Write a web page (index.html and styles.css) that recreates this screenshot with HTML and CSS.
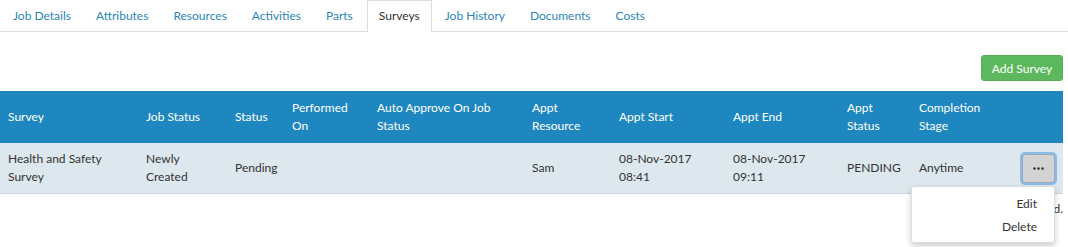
FILE: index.html
```html
<!DOCTYPE html>
<html lang="en">
<head>
  <meta charset="UTF-8">
  <meta name="viewport" content="width=device-width, initial-scale=1.0">
  <title>Job - Surveys</title>
  <link rel="stylesheet" href="styles.css">
</head>
<body>
  <ul class="tabs">
    <li><a href="#">Job Details</a></li>
    <li><a href="#">Attributes</a></li>
    <li><a href="#">Resources</a></li>
    <li><a href="#">Activities</a></li>
    <li><a href="#">Parts</a></li>
    <li class="active"><a href="#">Surveys</a></li>
    <li><a href="#">Job History</a></li>
    <li><a href="#">Documents</a></li>
    <li><a href="#">Costs</a></li>
  </ul>

  <div class="panel">
    <div class="toolbar">
      <button class="btn-add">Add Survey</button>
    </div>

    <table class="grid">
      <colgroup>
        <col style="width:138px">
        <col style="width:89px">
        <col style="width:57px">
        <col style="width:85px">
        <col style="width:155px">
        <col style="width:87px">
        <col style="width:114px">
        <col style="width:114px">
        <col style="width:72px">
        <col style="width:103px">
        <col>
      </colgroup>
      <thead>
        <tr>
          <th>Survey</th>
          <th>Job Status</th>
          <th>Status</th>
          <th>Performed On</th>
          <th>Auto Approve On Job Status</th>
          <th>Appt Resource</th>
          <th>Appt Start</th>
          <th>Appt End</th>
          <th>Appt Status</th>
          <th>Completion Stage</th>
          <th></th>
        </tr>
      </thead>
      <tbody>
        <tr>
          <td>Health and Safety Survey</td>
          <td>Newly Created</td>
          <td>Pending</td>
          <td></td>
          <td></td>
          <td>Sam</td>
          <td>08-Nov-2017 08:41</td>
          <td>08-Nov-2017 09:11</td>
          <td>PENDING</td>
          <td>Anytime</td>
          <td class="actions">
            <button class="btn-more" aria-label="More">
              <svg width="11" height="3" viewBox="0 0 11 3"><circle cx="1.5" cy="1.5" r="1.3"/><circle cx="5.5" cy="1.5" r="1.3"/><circle cx="9.5" cy="1.5" r="1.3"/></svg>
            </button>
          </td>
        </tr>
      </tbody>
    </table>

    <div class="footer">1 record found.</div>

    <ul class="menu">
      <li>Edit</li>
      <li>Delete</li>
    </ul>
  </div>
</body>
</html>
```

FILE: styles.css
```css
html, body {
  min-height: 247px;
}

body {
  margin: 0;
  font-family: 'Lato', 'Liberation Sans', sans-serif;
  font-size: 12px;
  color: #333;
  background: #fff;
}

.tabs {
  list-style: none;
  margin: 0;
  padding: 0 0 0 1px;
  display: flex;
  border-bottom: 1px solid #ddd;
  height: 31px;
}

.tabs li {
  margin-right: 1px;
}

.tabs a {
  display: block;
  height: 31px;
  line-height: 30px;
  padding: 0 11px;
  color: #2a86b8;
  text-decoration: none;
  border: 1px solid transparent;
  border-bottom: none;
  box-sizing: border-box;
}

.tabs li:first-child a {
  padding-left: 11px;
}

.tabs .active {
  margin-left: 1px;
}

.tabs .active a {
  color: #333;
  background: #fff;
  border-color: #ddd;
  height: 32px;
}

.panel {
  position: relative;
  width: 1063px;
}

.toolbar {
  display: flex;
  justify-content: flex-end;
  padding-top: 23px;
  height: 36px;
}

.btn-add {
  width: 82px;
  height: 26px;
  background-color: #5cb85c;
  color: white;
  border: 1px solid #53ad53;
  border-radius: 3px;
  font-family: inherit;
  font-size: 12px;
  padding: 0;
}

.grid {
  width: 1063px;
  border-collapse: collapse;
  table-layout: fixed;
}

.grid th {
  background-color: #1f87bf;
  color: #fff;
  font-weight: normal;
  text-align: left;
  line-height: 18px;
  padding: 8px 8px;
  height: 52px;
  box-sizing: border-box;
  vertical-align: middle;
}

.grid td {
  background-color: #dde7ee;
  line-height: 18px;
  padding: 7px 8px;
  height: 50px;
  box-sizing: border-box;
  border-bottom: 1px solid #cfd6dc;
  vertical-align: middle;
}

.btn-more {
  display: flex;
  align-items: center;
  justify-content: center;
  width: 33px;
  height: 29px;
  background: #d3d3d3;
  border: 1px solid #9ab;
  border-radius: 3px;
  box-shadow: 0 0 0 2px #8dbbe8;
  fill: #333;
  padding: 0;
}

.footer {
  text-align: right;
  margin-top: 7px;
  line-height: 16px;
}

.menu {
  position: absolute;
  left: 911px;
  top: 154px;
  width: 144px;
  margin: 0;
  padding: 5px 0 4px;
  list-style: none;
  background: #fff;
  border: 1px solid #ddd;
  border-radius: 3px;
  box-shadow: 0 3px 6px rgba(0, 0, 0, 0.2);
  box-sizing: border-box;
}

.menu li {
  text-align: right;
  padding: 0 17px;
  line-height: 23px;
}
```
